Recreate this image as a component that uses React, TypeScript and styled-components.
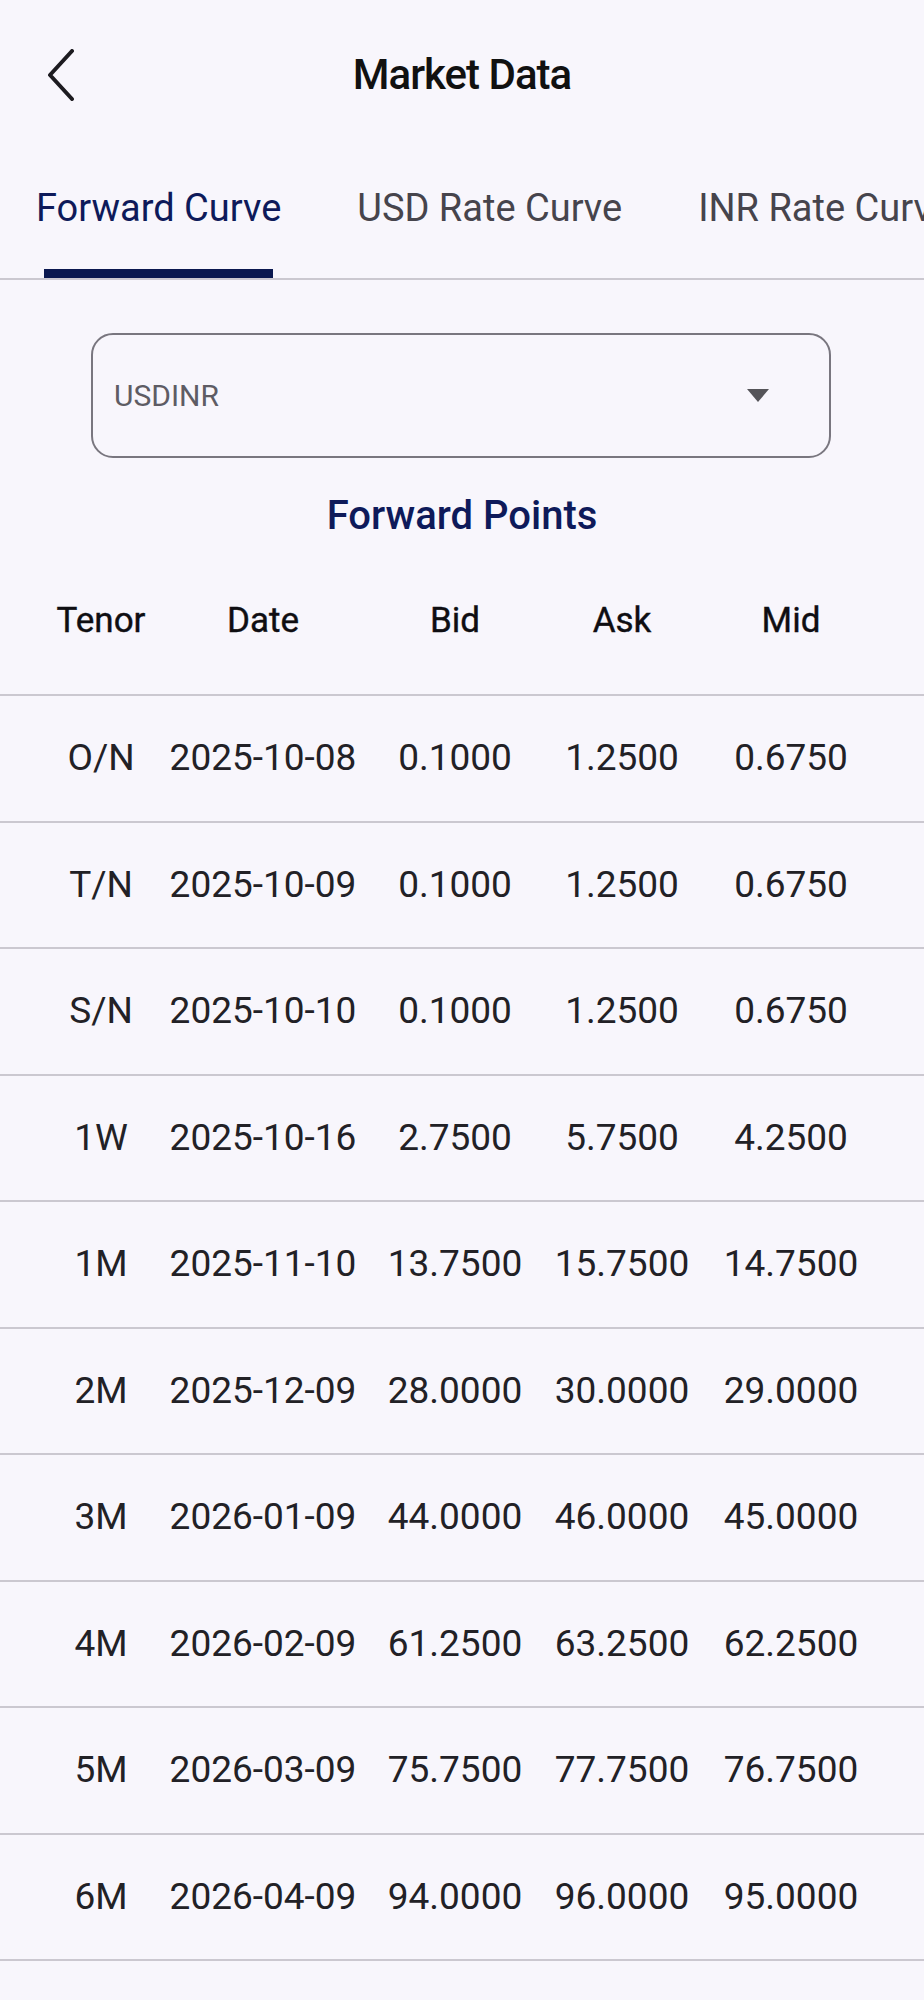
import React, { useState } from 'react'
import styled, { createGlobalStyle } from 'styled-components'

const GlobalStyle = createGlobalStyle`
  html, body {
    margin: 0;
    padding: 0;
    background: #f8f6fc;
  }
  body {
    font-family: Roboto, "Noto Sans", "Liberation Sans", sans-serif;
    color: #1d1b20;
  }
`

const NAVY = '#0e1a5a'

const rows = [
  { tenor: 'O/N', date: '2025-10-08', bid: '0.1000', ask: '1.2500', mid: '0.6750' },
  { tenor: 'T/N', date: '2025-10-09', bid: '0.1000', ask: '1.2500', mid: '0.6750' },
  { tenor: 'S/N', date: '2025-10-10', bid: '0.1000', ask: '1.2500', mid: '0.6750' },
  { tenor: '1W', date: '2025-10-16', bid: '2.7500', ask: '5.7500', mid: '4.2500' },
  { tenor: '1M', date: '2025-11-10', bid: '13.7500', ask: '15.7500', mid: '14.7500' },
  { tenor: '2M', date: '2025-12-09', bid: '28.0000', ask: '30.0000', mid: '29.0000' },
  { tenor: '3M', date: '2026-01-09', bid: '44.0000', ask: '46.0000', mid: '45.0000' },
  { tenor: '4M', date: '2026-02-09', bid: '61.2500', ask: '63.2500', mid: '62.2500' },
  { tenor: '5M', date: '2026-03-09', bid: '75.7500', ask: '77.7500', mid: '76.7500' },
  { tenor: '6M', date: '2026-04-09', bid: '94.0000', ask: '96.0000', mid: '95.0000' },
]

const tabs = ['Forward Curve', 'USD Rate Curve', 'INR Rate Curve']

const Page = styled.div`
  width: 924px;
  min-height: 2000px;
  background: #f8f6fc;
  overflow: hidden;
`

const AppBar = styled.header`
  height: 150px;
  display: grid;
  grid-template-columns: 1fr auto 1fr;
  align-items: center;
`

const BackButton = styled.button`
  justify-self: start;
  margin-left: 47px;
  padding: 0;
  border: 0;
  background: none;
  display: flex;
  cursor: pointer;
`

const Title = styled.h1`
  margin: 0;
  font-size: 42px;
  line-height: 1;
  font-weight: 500;
  letter-spacing: -1px;
  color: #111;
`

const TabBar = styled.nav`
  height: 128px;
  border-bottom: 2px solid #cbc8d0;
  display: flex;
  gap: 76px;
  padding-left: 36px;
  white-space: nowrap;
  overflow: hidden;
`

const Tab = styled.div<{ $active: boolean }>`
  position: relative;
  height: 100%;
  display: flex;
  align-items: center;
  padding-bottom: 12px;
  box-sizing: border-box;
  font-size: 38px;
  line-height: 1;
  color: ${p => (p.$active ? NAVY : '#46444c')};
  cursor: pointer;

  &::after {
    content: '';
    display: ${p => (p.$active ? 'block' : 'none')};
    position: absolute;
    left: 8px;
    right: 8px;
    bottom: -1px;
    height: 10px;
    background: #0b1850;
  }
`

const Select = styled.div`
  margin: 53px 93px 0 91px;
  height: 125px;
  box-sizing: border-box;
  border: 2px solid #79767f;
  border-radius: 22px;
  display: flex;
  align-items: center;
  justify-content: space-between;
  padding: 0 60px 0 21px;
`

const SelectValue = styled.span`
  font-size: 30px;
  color: #5e5c64;
`

const Caret = styled.span`
  width: 0;
  height: 0;
  border-left: 11px solid transparent;
  border-right: 11px solid transparent;
  border-top: 13px solid #555459;
`

const SectionTitle = styled.h2`
  margin: 34px 0 0;
  text-align: center;
  font-size: 40px;
  line-height: 48px;
  font-weight: 500;
  color: ${NAVY};
`

const Row = styled.div<{ $head?: boolean }>`
  display: grid;
  grid-template-columns: 122px 202px 182px 152px 186px;
  padding-left: 40px;
  justify-items: center;
  align-items: center;
  box-sizing: border-box;
  height: ${p => (p.$head ? '156px' : '126.5px')};
  padding-top: ${p => (p.$head ? '8px' : '0')};
  border-bottom: 2px solid #cbc8d0;
`

const HeadCell = styled.div`
  font-size: 35px;
  line-height: 44px;
  color: #0f0e12;
  -webkit-text-stroke: 0.4px #0f0e12;
`

const Cell = styled.div`
  font-size: 37px;
  line-height: 44px;
  color: #222126;
  white-space: nowrap;
`

export default function App() {
  const [active, setActive] = useState(0)

  return (
    <Page>
      <GlobalStyle />
      <AppBar>
        <BackButton aria-label="Back">
          <svg width="28" height="52" viewBox="0 0 28 52" fill="none">
            <path d="M25 2 L3 26 L25 50" stroke="#1d1b20" strokeWidth="4" strokeLinecap="round" strokeLinejoin="round" />
          </svg>
        </BackButton>
        <Title>Market Data</Title>
        <span />
      </AppBar>

      <TabBar>
        {tabs.map((t, i) => (
          <Tab key={t} $active={i === active} onClick={() => setActive(i)}>
            {t}
          </Tab>
        ))}
      </TabBar>

      <Select>
        <SelectValue>USDINR</SelectValue>
        <Caret />
      </Select>

      <SectionTitle>Forward Points</SectionTitle>

      <Row $head>
        <HeadCell>Tenor</HeadCell>
        <HeadCell>Date</HeadCell>
        <HeadCell>Bid</HeadCell>
        <HeadCell>Ask</HeadCell>
        <HeadCell>Mid</HeadCell>
      </Row>
      {rows.map(r => (
        <Row key={r.tenor}>
          <Cell>{r.tenor}</Cell>
          <Cell>{r.date}</Cell>
          <Cell>{r.bid}</Cell>
          <Cell>{r.ask}</Cell>
          <Cell>{r.mid}</Cell>
        </Row>
      ))}
    </Page>
  )
}
